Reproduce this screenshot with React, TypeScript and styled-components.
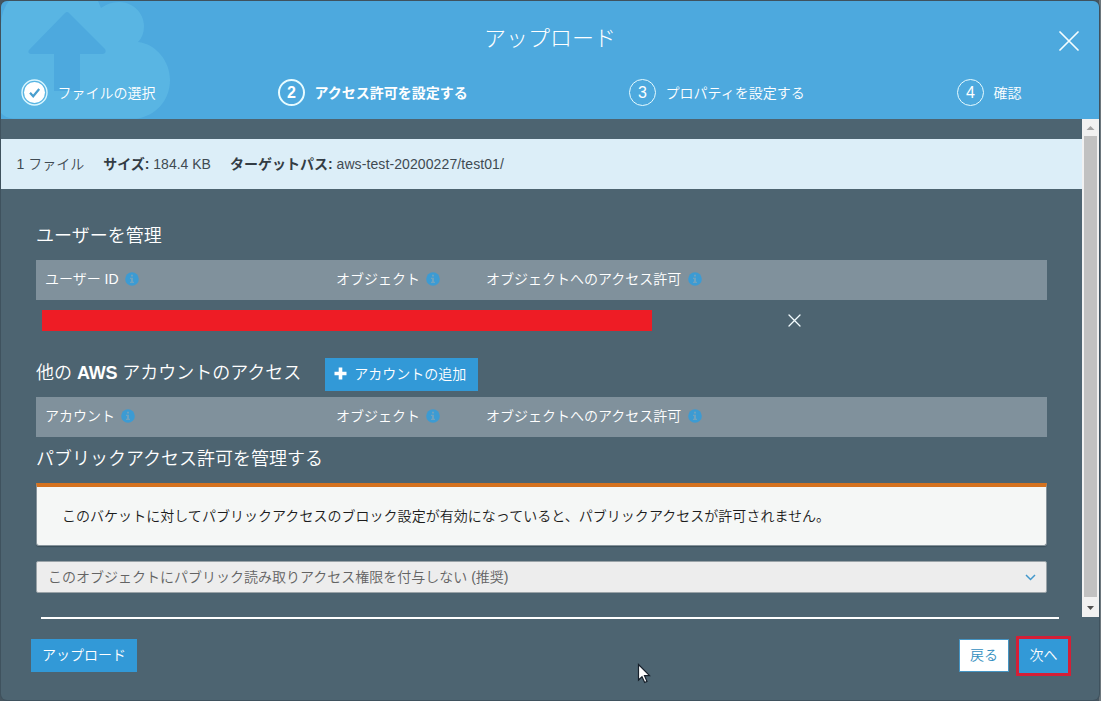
import React from "react";
import styled, { createGlobalStyle, css } from "styled-components";

const slate = "#4d6471";
const blue = "#3299d7";

const GlobalStyle = createGlobalStyle`
  * { box-sizing: border-box; }
  html, body { margin: 0; padding: 0; }
  body {
    width: 1101px;
    height: 701px;
    overflow: hidden;
    background: #6f7c84;
    font-family: "Liberation Sans", "Noto Sans CJK JP", sans-serif;
    font-size: 14px;
    font-weight: 350;
    line-height: 20px;
    color: #fff;
  }
`;

const Backdrop = styled.div`
  position: relative;
  width: 1101px;
  height: 701px;
  padding: 1px 2px 1px 1px;
  background: linear-gradient(to right, #46555f 0 1099px, #6d777d 1099px);
`;

const Dialog = styled.div`
  display: flex;
  flex-direction: column;
  width: 1098px;
  height: 699px;
  border-radius: 6px;
  overflow: hidden;
  background: ${slate};
  box-shadow: 0 0 0 1px #3f525e;
`;

const Header = styled.header`
  position: relative;
  flex: none;
  height: 118px;
  background: #4da9de;
`;

const CloudArt = styled.svg`
  position: absolute;
  left: 0;
  top: 0;
`;

const TitleRow = styled.div`
  position: relative;
  display: flex;
  justify-content: center;
  height: 73px;
  padding-top: 21px;
`;

const Title = styled.h1`
  margin: 0;
  font-size: 22px;
  font-weight: 300;
  line-height: 34px;
`;

const CloseButton = styled.button`
  position: absolute;
  right: 20px;
  top: 30px;
  display: flex;
  padding: 0;
  border: 0;
  background: none;
`;

const Steps = styled.ol`
  position: relative;
  display: grid;
  grid-template-columns: 257px 351px 328px auto;
  margin: 0;
  padding: 4px 0 0 20px;
  list-style: none;
`;

const Step = styled.li<{ $active?: boolean }>`
  display: flex;
  align-items: center;
  gap: 9.5px;
  height: 28px;
  white-space: nowrap;
  font-weight: ${(p) => (p.$active ? 700 : 350)};
`;

const StepLabel = styled.span`
  padding-top: 2px;
`;

const StepMark = styled.span<{ $active?: boolean }>`
  display: flex;
  align-items: center;
  justify-content: center;
  width: 27px;
  height: 27px;
  padding-top: 1px;
  border: ${(p) => (p.$active ? 2 : 1.5)}px solid #e6fbff;
  border-radius: 50%;
  font-size: 16px;
`;

const ScrollArea = styled.div`
  flex: none;
  display: flex;
  height: 498px;
`;

const Content = styled.main`
  width: 1081px;
  padding-top: 20px;
`;

const InfoBar = styled.div`
  display: flex;
  align-items: center;
  gap: 19px;
  height: 50px;
  padding-left: 15.5px;
  background: #dceef8;
  color: #3f4a52;
  white-space: nowrap;
`;

const Label = styled.b`
  color: #333c44;
`;

const PathText = styled.span`
  letter-spacing: 0.1px;
`;

const Body = styled.div`
  display: flex;
  flex-direction: column;
  width: 1046px;
  padding: 34px 0 0 35px;
`;

const SectionTitle = styled.h2`
  margin: 0;
  font-size: 18px;
  font-weight: 350;
  line-height: 26px;
  white-space: nowrap;
  b {
    letter-spacing: -0.3px;
  }
`;

const TableHead = styled.div`
  display: grid;
  grid-template-columns: 291px 150px 1fr;
  align-items: center;
  height: 40px;
  padding: 0 0 2px 9px;
  background: #80919c;
`;

const UsersHeading = styled(SectionTitle)`
  margin-bottom: 11px;
`;

const PublicHeading = styled(SectionTitle)`
  margin-top: 9px;
`;

const HeadCell = styled.span`
  display: flex;
  align-items: center;
  gap: 6.4px;
  white-space: nowrap;
`;

const UserRow = styled.div`
  display: flex;
  align-items: center;
  height: 58px;
  padding: 0 0 17px 6px;
`;

const Redaction = styled.div`
  width: 610px;
  height: 21px;
  margin: 0 136px 1px 0;
  background: #ee1c25;
`;

const AccountsRow = styled.div`
  display: flex;
  gap: 23.5px;
  height: 39px;
  ${SectionTitle} {
    padding-top: 2px;
  }
`;

const buttonLook = css`
  display: flex;
  align-items: center;
  justify-content: center;
  height: 33px;
  padding: 0 0 2px;
  border: 0;
  font: inherit;
  white-space: nowrap;
`;

const Button = styled.button<{ $width: number; $plain?: boolean }>`
  ${buttonLook}
  width: ${(p) => p.$width}px;
  background: ${(p) => (p.$plain ? "#fff" : blue)};
  color: ${(p) => (p.$plain ? "#338fc0" : "#fff")};
  box-shadow: ${(p) => (p.$plain ? "inset 0 0 0 1px #4595c4" : "none")};
  svg {
    margin: 0 7px 0 -2px;
  }
`;

const Notice = styled.div`
  height: 63px;
  margin-top: 11px;
  padding: 19px 0 0 25px;
  border: solid #87949c;
  border-width: 0 1px 1px;
  border-top: 4px solid #d5721f;
  border-radius: 0 0 3px 3px;
  background: #f5f7f6;
  box-shadow: 0 1px 1px rgba(30, 45, 55, 0.4);
  color: #1c1c1c;
  white-space: nowrap;
  letter-spacing: 0.03px;
`;

const Select = styled.div`
  display: flex;
  align-items: center;
  justify-content: space-between;
  height: 32px;
  margin-top: 15px;
  padding: 0 10px 0 11px;
  border: 1px solid #9aa3a8;
  border-radius: 2px;
  background: #ededed;
  color: #636363;
  white-space: nowrap;
`;

const Scrollbar = styled.div`
  display: flex;
  flex-direction: column;
  align-items: center;
  width: 17px;
  background: #f1f1f1;
`;

const ScrollArrow = styled.svg`
  flex: none;
  display: block;
`;

const Thumb = styled.div`
  width: 13px;
  height: 461px;
  background: #c1c1c1;
`;

const Footer = styled.footer`
  flex: 1;
  padding: 0 28px 0 30px;
`;

const Divider = styled.div`
  height: 2px;
  margin: 0 12px 17px 10px;
  background: #fff;
`;

const Actions = styled.div`
  display: flex;
  align-items: flex-start;
  padding-top: 3px;
`;

const BackSlot = styled.div`
  margin-left: auto;
  margin-right: 7px;
`;

const Highlight = styled.div`
  width: 55px;
  height: 40px;
  margin-top: -3px;
  border: 3px solid #d51f36;
  background: ${blue};
`;

const Pointer = styled.svg`
  position: absolute;
  left: 637px;
  top: 663px;
`;

const Cross = ({ size, stroke }: { size: number; stroke: number }) => (
  <svg width={size} height={size} viewBox={`0 0 ${size} ${size}`}>
    <path d={`M1 1L${size - 1} ${size - 1}M${size - 1} 1L1 ${size - 1}`} stroke="#f4fdff" strokeWidth={stroke} strokeLinecap="round" />
  </svg>
);

const InfoIcon = () => (
  <svg width="14" height="14" viewBox="0 0 14 14">
    <circle cx="7" cy="7" r="6.8" fill="#3c9bd3" />
    <path d="M6 2.8h2v1.7H6zM5 5.8h3v4h1v1.2H5V9.8h1V7H5z" fill="#6fa2bf" />
  </svg>
);

const PermissionHead = ({ first }: { first: string }) => (
  <TableHead>
    {[first, "オブジェクト", "オブジェクトへのアクセス許可"].map((text) => (
      <HeadCell key={text}>
        {text}
        <InfoIcon />
      </HeadCell>
    ))}
  </TableHead>
);

export default function App() {
  return (
    <Backdrop>
      <GlobalStyle />
      <Dialog>
        <Header>
          <CloudArt width="180" height="118" viewBox="1 1 180 118">
            <path
              d="M1 24Q2 9 9 1H98L101 8Q109 2 119 2C133 2 144 13 144 26Q144 36 138 42C156 44 170 61 170 80C170 101 155 116 137 118.500H14Q5 118 1 113Z"
              fill="#59b5e3"
            />
            <path d="M65 13Q67 11 69 13L105 49Q107 53 103 54H80V91H54V54H31Q27 53 29 50Z" fill="#4da9de" />
          </CloudArt>
          <TitleRow>
            <Title>アップロード</Title>
            <CloseButton aria-label="閉じる">
              <Cross size={20} stroke={1.7} />
            </CloseButton>
          </TitleRow>
          <Steps>
            <Step>
              <svg width="27" height="27" viewBox="0 0 27 27">
                <circle cx="13.5" cy="13.500" r="12.500" fill="none" stroke="#d9f6ff" strokeWidth="1.400" />
                <circle cx="13.500" cy="13.500" r="10.500" fill="#fff" />
                <path d="M9 13.800l3.200 3.500 6-7.300" fill="none" stroke="#4a9fcf" strokeWidth="2.200" />
              </svg>
              <StepLabel>ファイルの選択</StepLabel>
            </Step>
            <Step $active>
              <StepMark $active>2</StepMark>
              <StepLabel>アクセス許可を設定する</StepLabel>
            </Step>
            <Step>
              <StepMark>3</StepMark>
              <StepLabel>プロパティを設定する</StepLabel>
            </Step>
            <Step>
              <StepMark>4</StepMark>
              <StepLabel>確認</StepLabel>
            </Step>
          </Steps>
        </Header>
        <ScrollArea>
          <Content>
            <InfoBar>
              <span>1 ファイル</span>
              <span>
                <Label>サイズ:</Label> 184.4 KB
              </span>
              <span>
                <Label>ターゲットパス:</Label> <PathText>aws-test-20200227/test01/</PathText>
              </span>
            </InfoBar>
            <Body>
              <UsersHeading>ユーザーを管理</UsersHeading>
              <PermissionHead first="ユーザー ID" />
              <UserRow>
                <Redaction />
                <Cross size={13} stroke={1.3} />
              </UserRow>
              <AccountsRow>
                <SectionTitle>
                  他の <b>AWS</b> アカウントのアクセス
                </SectionTitle>
                <Button $width={153}>
                  <svg width="13" height="13" viewBox="0 0 13 13">
                    <path d="M6.500 0.500v12M0.500 6.500h12" stroke="#fff" strokeWidth="3.600" />
                  </svg>
                  アカウントの追加
                </Button>
              </AccountsRow>
              <PermissionHead first="アカウント" />
              <PublicHeading>パブリックアクセス許可を管理する</PublicHeading>
              <Notice>
                このバケットに対してパブリックアクセスのブロック設定が有効になっていると、パブリックアクセスが許可されません。
              </Notice>
              <Select>
                このオブジェクトにパブリック読み取りアクセス権限を付与しない (推奨)
                <svg width="11" height="7" viewBox="0 0 11 7">
                  <path d="M1 1l4.500 4.500L10 1" fill="none" stroke="#4298cc" strokeWidth="1.500" />
                </svg>
              </Select>
            </Body>
          </Content>
          <Scrollbar>
            <ScrollArrow width="17" height="17" viewBox="0 0 17 17">
              <path d="M8.500 7L12.500 11H4.500Z" fill="#a3a3a3" />
            </ScrollArrow>
            <Thumb />
            <ScrollArrow width="17" height="20" viewBox="0 0 17 20">
              <path d="M5 9H12L8.500 13Z" fill="#505050" />
            </ScrollArrow>
          </Scrollbar>
        </ScrollArea>
        <Footer>
          <Divider />
          <Actions>
            <Button $width={106}>アップロード</Button>
            <BackSlot>
              <Button $width={50} $plain>
                戻る
              </Button>
            </BackSlot>
            <Highlight>
              <Button $width={49}>次へ</Button>
            </Highlight>
          </Actions>
        </Footer>
      </Dialog>
      <Pointer width="14" height="21" viewBox="0 0 14 21">
        <path d="M1.500 1.500V17L5 13.700L7.700 19.500L10 18.400L7.500 12.700H12.500Z" fill="#fff" stroke="#17202b" strokeWidth="1.200" />
      </Pointer>
    </Backdrop>
  );
}
